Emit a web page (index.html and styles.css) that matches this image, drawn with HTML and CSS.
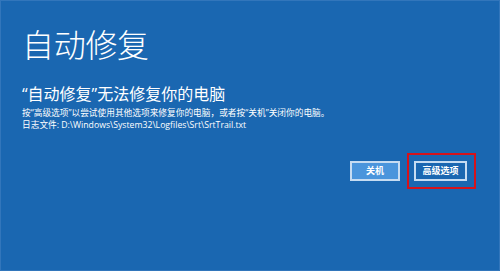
FILE: index.html
```html
<!DOCTYPE html>
<html lang="zh-CN">
<head>
<meta charset="utf-8">
<title>自动修复</title>
<link rel="stylesheet" href="styles.css">
</head>
<body>
<main class="screen">
  <h1 class="title">自动修复</h1>
  <section class="message">
    <p class="headline">“自动修复”无法修复你的电脑</p>
    <p class="detail">按“高级选项”以尝试使用其他选项来修复你的电脑，或者按“关机”关闭你的电脑。</p>
    <p class="detail">日志文件: D:\Windows\System32\Logfiles\Srt\SrtTrail.txt</p>
  </section>
  <div class="actions">
    <button class="btn btn-primary" type="button">关机</button>
    <button class="btn btn-secondary highlighted" type="button">高级选项</button>
  </div>
</main>
</body>
</html>
```
FILE: styles.css
```css
html, body {
  margin: 0;
  padding: 0;
}
body {
  width: 500px;
  height: 271px;
  background: #1a67b1;
  font-family: "Noto Sans CJK SC", "Noto Sans", sans-serif;
  color: #ffffff;
  overflow: hidden;
}
.screen {
  box-sizing: border-box;
  width: 500px;
  height: 271px;
  border: 1px solid #3276bb;
  padding: 26px 32px 0 21px;
  display: flex;
  flex-direction: column;
}
.title {
  margin: 0;
  font-size: 32px;
  line-height: 32px;
  font-weight: 300;
  letter-spacing: -0.3px;
}
.message {
  margin-top: 27px;
  display: flex;
  flex-direction: column;
}
.headline {
  margin: 0 0 5px 0;
  font-family: "Open Sans", "Noto Sans CJK SC", sans-serif;
  font-size: 16px;
  line-height: 16px;
  font-weight: 400;
}
.detail {
  margin: 0;
  font-family: "Open Sans", "Noto Sans CJK SC", sans-serif;
  font-size: 8.7px;
  line-height: 12px;
  font-weight: 400;
}
.actions {
  margin-top: 30px;
  display: flex;
  justify-content: flex-end;
  gap: 14px;
}
.btn {
  box-sizing: border-box;
  height: 20px;
  padding: 0;
  border: 2px solid #c6dcf2;
  color: #ffffff;
  font-family: "Noto Sans CJK SC", sans-serif;
  font-size: 9px;
  font-weight: 700;
  line-height: 16px;
}
.btn-primary {
  width: 50px;
  background: #4a95dc;
}
.btn-secondary {
  width: 53px;
  background: #1a67b1;
}
.highlighted {
  position: relative;
}
.highlighted::after {
  content: "";
  position: absolute;
  left: -9px;
  top: -10px;
  right: -11px;
  bottom: -10px;
  border: 2px solid #d5131b;
}
```
